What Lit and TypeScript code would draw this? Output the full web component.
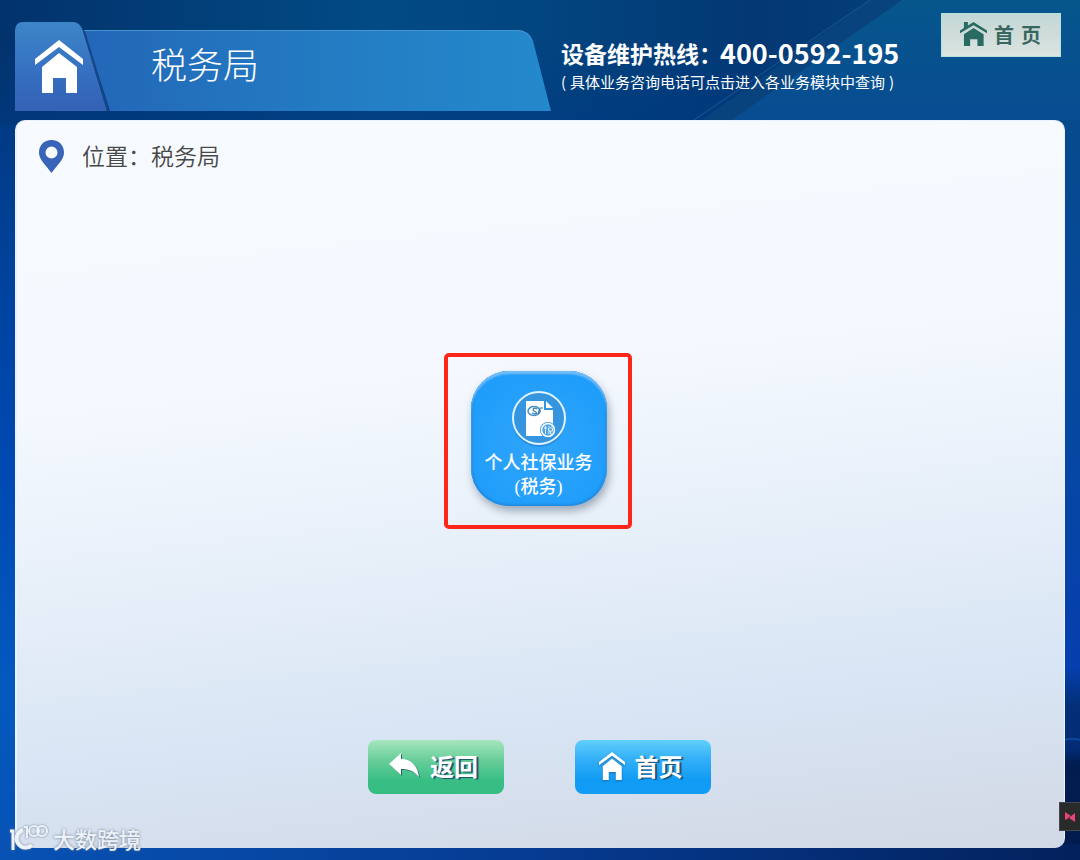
import { LitElement, html, css } from "lit";
import { customElement, property } from "lit/decorators.js";

@customElement("house-icon")
class HouseIcon extends LitElement {
  @property({ type: Boolean }) chimney = false;

  static styles = css`
    :host { display: block; }
    svg { display: block; width: 100%; height: 100%; overflow: visible; }
    .stack { display: none; }
    .stack.shown { display: inline; }
  `;

  render() {
    return html`<svg viewBox="0 0 48 53" preserveAspectRatio="none" fill="currentColor" aria-hidden="true">
      <path class="stack ${this.chimney ? "shown" : ""}" d="M7 0h7v9l-7 6z" />
      <path d="M24 0 48 19v6L24 7 0 25v-6z" />
      <path d="M24 13 42 27v26H31V38H18v15H7V27z" />
    </svg>`;
  }
}

@customElement("app-root")
export class AppRoot extends LitElement {
  @property() department = "税务局";

  static styles = css`
    :host {
      display: block;
      font-family: "Noto Sans CJK SC", "Noto Sans", sans-serif;
      color: #fff;
    }
    * { box-sizing: border-box; }
    a { color: inherit; text-decoration: none; }
    button { font: inherit; color: inherit; border: 0; padding: 0; cursor: pointer; }
    h1, p { margin: 0; font-weight: inherit; }
    .page {
      position: relative;
      isolation: isolate;
      min-height: 100vh;
      display: flex;
      flex-direction: column;
      padding: 0 15px 12px;
      overflow: hidden;
    }
    .backdrop {
      position: absolute;
      inset: 0;
      z-index: -1;
      width: 100%;
      height: 100%;
    }
    .header { display: flex; height: 120px; }
    .brand {
      position: relative;
      flex: none;
      display: flex;
      width: 536px;
      height: 89px;
      margin-top: 22px;
    }
    .tabs { position: absolute; inset: 0; z-index: -1; width: 100%; height: 100%; }
    .home { width: 92px; padding: 18px 0 0 20px; }
    .home house-icon { width: 48px; height: 53px; }
    .title { padding: 15px 0 0 44px; font-size: 36px; line-height: 52px; font-weight: 300; }
    .hotline { flex: 1; padding: 36px 0 0 10px; white-space: nowrap; }
    .phone { display: flex; align-items: center; height: 34px; font-size: 23px; line-height: 34px; font-weight: 700; }
    .number { margin-left: -2px; font-size: 27px; }
    .note { display: flex; gap: 4px; font-size: 15px; line-height: 23px; }
    .top-home {
      flex: none;
      display: flex;
      align-items: center;
      gap: 7px;
      width: 120px;
      height: 44px;
      margin: 13px 4px 0 0;
      padding: 0 0 2px 18px;
      border: 1px solid #b5e0dd;
      background: linear-gradient(#c2d8d6, #cfdcd9 50%, #dbe5e2);
      color: #296a62;
      font-size: 20px;
      font-weight: 700;
    }
    .top-home house-icon { width: 27px; height: 24px; }
    .top-home .label { display: flex; gap: 7px; color: #3a6662; }
    .panel {
      flex: 1;
      display: flex;
      flex-direction: column;
      padding: 19px 24px 54px 22px;
      border: 1px solid #e9f2ff;
      border-width: 1px 1px 0 2px;
      border-radius: 10px;
      background: linear-gradient(174deg, #f7fbff 0%, #f5f9ff 35%, #e7eff9 57%, #d8e5f4 78%, #d4dce9 93%, #d1d9e6 100%);
      color: #484848;
    }
    .location { display: flex; gap: 18px; height: 33px; font-size: 23px; line-height: 30px; font-weight: 350; }
    .pin { width: 25px; height: 33px; }
    .services { flex: 1; display: grid; place-items: center; padding-right: 4px; }
    .highlight {
      display: flex;
      justify-content: center;
      width: 188px;
      height: 176px;
      padding: 14px 0 0 2px;
      border: 4px solid #fc2719;
      border-radius: 5px;
    }
    .service {
      display: flex;
      flex-direction: column;
      align-items: center;
      width: 136px;
      height: 135px;
      padding-top: 18px;
      border-radius: 38px;
      background: radial-gradient(circle at 50% 55%, #31a5fb, #1e9dfb 80%);
      box-shadow: inset 0 3px 2px #76befa, inset 0 -2px 2px #218ce3, inset 2px 0 2px #248fe6, inset -2px 0 2px #248fe6, 2px 5px 8px #65788c99;
      color: #fff;
      font-family: "Liberation Serif", "Noto Sans CJK SC", serif;
      font-size: 18px;
      line-height: 24px;
      font-weight: 500;
    }
    .service svg { flex: none; width: 60px; height: 62px; overflow: visible; }
    .actions { display: flex; justify-content: center; gap: 71px; margin-top: 32px; }
    .action {
      display: flex;
      align-items: center;
      justify-content: center;
      gap: 10px;
      width: 136px;
      height: 54px;
      padding: 0 5px 3px 0;
      border-radius: 8px;
      color: #fff;
      font-size: 24px;
      font-weight: 700;
      text-shadow: 2px 1px 1px #174c73;
    }
    .back { background: linear-gradient(#a5e5bd, #65cc98 40%, #38be84 75%, #36bd82); }
    .main-home { background: linear-gradient(#60d0fc, #34b0f8 35%, #109bf4 75%, #129cf5); }
    .action svg { width: 31px; height: 25px; overflow: visible; filter: drop-shadow(1px 1px 0 #23665c); }
    .action house-icon { width: 26px; height: 28px; filter: drop-shadow(0 1px 1px #176bb0); }
    .watermark {
      position: absolute;
      left: 9px;
      bottom: 6px;
      display: flex;
      align-items: center;
      gap: 5px;
      color: #edf2f8;
      font-size: 22px;
      line-height: 32px;
      font-weight: 500;
      text-shadow: 0 0 3px #66788e;
    }
    .watermark svg { width: 39px; height: 30px; filter: drop-shadow(0 0 1px #74869c); }
    .handle {
      position: absolute;
      right: 0;
      bottom: 29px;
      width: 21px;
      height: 29px;
      border: 1px solid #45484b;
      border-right: 0;
      background: #292b2b;
    }
    .handle svg { display: block; width: 20px; height: 27px; }
  `;

  render() {
    return html`
      <div class="page">
        <svg class="backdrop" viewBox="0 0 1080 860" preserveAspectRatio="none" aria-hidden="true">
          <defs>
            <linearGradient id="left" x2="0" y2="1">
              <stop stop-color="#043970" /><stop offset=".13" stop-color="#013a82" />
              <stop offset=".35" stop-color="#0043a0" /><stop offset=".55" stop-color="#0049b2" />
              <stop offset=".8" stop-color="#0459bf" /><stop offset="1" stop-color="#0752b4" />
            </linearGradient>
            <linearGradient id="top">
              <stop stop-color="#02326c" /><stop offset=".35" stop-color="#024b85" />
              <stop offset=".5" stop-color="#024580" /><stop offset=".7" stop-color="#033873" />
              <stop offset="1" stop-color="#064880" />
            </linearGradient>
            <linearGradient id="fade" x2="0" y2="1">
              <stop offset=".3" stop-color="#003b82" stop-opacity="0" /><stop offset="1" stop-color="#003a80" stop-opacity=".75" />
            </linearGradient>
            <linearGradient id="ray" x2="0" y2="1">
              <stop stop-color="#06568c" /><stop offset="1" stop-color="#084c92" />
            </linearGradient>
            <linearGradient id="right" x2="0" y2="1">
              <stop stop-color="#074a8c" /><stop offset=".4" stop-color="#0648a0" />
              <stop offset=".74" stop-color="#063fae" /><stop offset=".79" stop-color="#033079" />
              <stop offset=".85" stop-color="#032b75" /><stop offset=".87" stop-color="#011d50" />
              <stop offset="1" stop-color="#031b4d" />
            </linearGradient>
            <linearGradient id="bottom">
              <stop stop-color="#0752b4" /><stop offset=".5" stop-color="#063b91" /><stop offset="1" stop-color="#03215c" />
            </linearGradient>
          </defs>
          <rect width="1080" height="860" fill="url(#left)" />
          <rect width="1080" height="125" fill="url(#top)" />
          <rect width="900" height="125" fill="url(#fade)" />
          <path d="M870 0h32L735 125h-40z" fill="#09437d" />
          <path d="M902 0h178v125H725z" fill="url(#ray)" />
          <path d="M694 120 870 0" stroke="#1c5792" stroke-width="1" />
          <rect x="1060" y="120" width="20" height="740" fill="url(#right)" />
          <rect y="844" width="1080" height="16" fill="url(#bottom)" />
          <path d="M1060 741q12-4 20-1" fill="none" stroke="#0b48a0" stroke-width="2" />
        </svg>

        <header class="header">
          <div class="brand">
            <svg class="tabs" viewBox="0 0 536 89" aria-hidden="true">
              <defs>
                <linearGradient id="bar"><stop stop-color="#2367b8" /><stop offset=".5" stop-color="#237bc2" /><stop offset="1" stop-color="#2489cc" /></linearGradient>
                <linearGradient id="tab" x2="0" y2="1"><stop stop-color="#3c86c7" /><stop offset=".55" stop-color="#3670c1" /><stop offset="1" stop-color="#3461b4" /></linearGradient>
              </defs>
              <path d="M69 8H502q12 0 16 11l18 70H95z" fill="url(#bar)" />
              <path d="M69 8.500H502q11 0 15 10" fill="none" stroke="#4795d0" />
              <path d="M8 0H58q7 0 10 9l24 80H0V9q0-9 8-9z" fill="url(#tab)" />
              <path d="M69 9 93 89" stroke="#164887" stroke-width="2" />
            </svg>
            <a class="home" href="#home" aria-label="首页"><house-icon></house-icon></a>
            <h1 class="title">${this.department}</h1>
          </div>
          <div class="hotline">
            <p class="phone"><span>设备维护热线：</span><span class="number">400-0592-195</span></p>
            <p class="note"><span>(</span><span>具体业务咨询电话可点击进入各业务模块中查询</span><span>)</span></p>
          </div>
          <button class="top-home" aria-label="首页">
            <house-icon chimney></house-icon>
            <span class="label"><span>首</span><span>页</span></span>
          </button>
        </header>

        <main class="panel">
          <div class="location">
            <svg class="pin" viewBox="0 0 25 33" aria-hidden="true">
              <path fill="#3865b7" fill-rule="evenodd" d="M12.500 0C5 0 0 5.400 0 12.500 0 20 7 25 12.500 33 18 25 25 20 25 12.500 25 5.400 20 0 12.500 0zm0 6.500a6 6 0 1 1 0 12 6 6 0 0 1 0-12z" />
            </svg>
            <span>位置：${this.department}</span>
          </div>

          <section class="services">
            <div class="highlight">
              <button class="service">
                <svg viewBox="0 0 60 62" aria-hidden="true">
                  <circle cx="30" cy="31" r="27" fill="#257fca" opacity=".6" />
                  <circle cx="30" cy="29" r="26" fill="#3596df" stroke="#e1f3ff" stroke-width="2" />
                  <path d="M17 12H35v9h9V47H17z" fill="#fff" />
                  <path d="M37 12v7h7z" fill="#fff" />
                  <ellipse cx="25" cy="22" rx="6" ry="4.500" fill="#fff" stroke="#438fc8" stroke-width="1.500" />
                  <path d="M28 20c-3-2-5 0-3 2 2 1 4 2 1 3l-3-1M29 25l2-6h3m-4 3h2" fill="none" stroke="#347fae" stroke-width="1.200" />
                  <circle cx="39" cy="41" r="8" fill="#3596df" />
                  <circle cx="39" cy="41" r="6.500" fill="#4fa5e4" stroke="#fff" stroke-width="1.500" />
                  <path d="M35 39h3m-1.500-2v8m3-8 1 1m3-1-1 1m-3 1h4v3h-4zm1 3-1 3m2-3v3h2" fill="none" stroke="#e7f5ff" stroke-width=".9" />
                </svg>
                <span>个人社保业务</span>
                <span>(税务)</span>
              </button>
            </div>
          </section>

          <nav class="actions">
            <button class="action back">
              <svg viewBox="0 0 31 25" aria-hidden="true"><path fill="#fff" d="M0 11 12 0v6c10 0 17 7 18 18-5-6-10-8-18-8v6z" /></svg>
              <span>返回</span>
            </button>
            <button class="action main-home"><house-icon></house-icon><span>首页</span></button>
          </nav>
        </main>

        <div class="watermark">
          <svg viewBox="0 0 39 30" fill="none" stroke="#edf2f8" aria-hidden="true">
            <path d="M1 8h3v19" stroke-width="3" />
            <path d="M14 7A9 9 0 1 0 23 22" stroke-width="4" />
            <path d="M15 4h3v11" stroke-width="2" />
            <circle cx="25" cy="8" r="5" stroke-width="2" /><circle cx="33" cy="8" r="5" stroke-width="2" />
          </svg>
          <span>大数跨境</span>
        </div>
        <div class="handle">
          <svg viewBox="0 0 20 27" aria-hidden="true"><path fill="#e8447a" d="M5 9 11 13 15 10V19L9 15 5 17z" /><path d="M13 10 7 17" stroke="#292b2b" stroke-width=".8" /></svg>
        </div>
      </div>
    `;
  }
}
